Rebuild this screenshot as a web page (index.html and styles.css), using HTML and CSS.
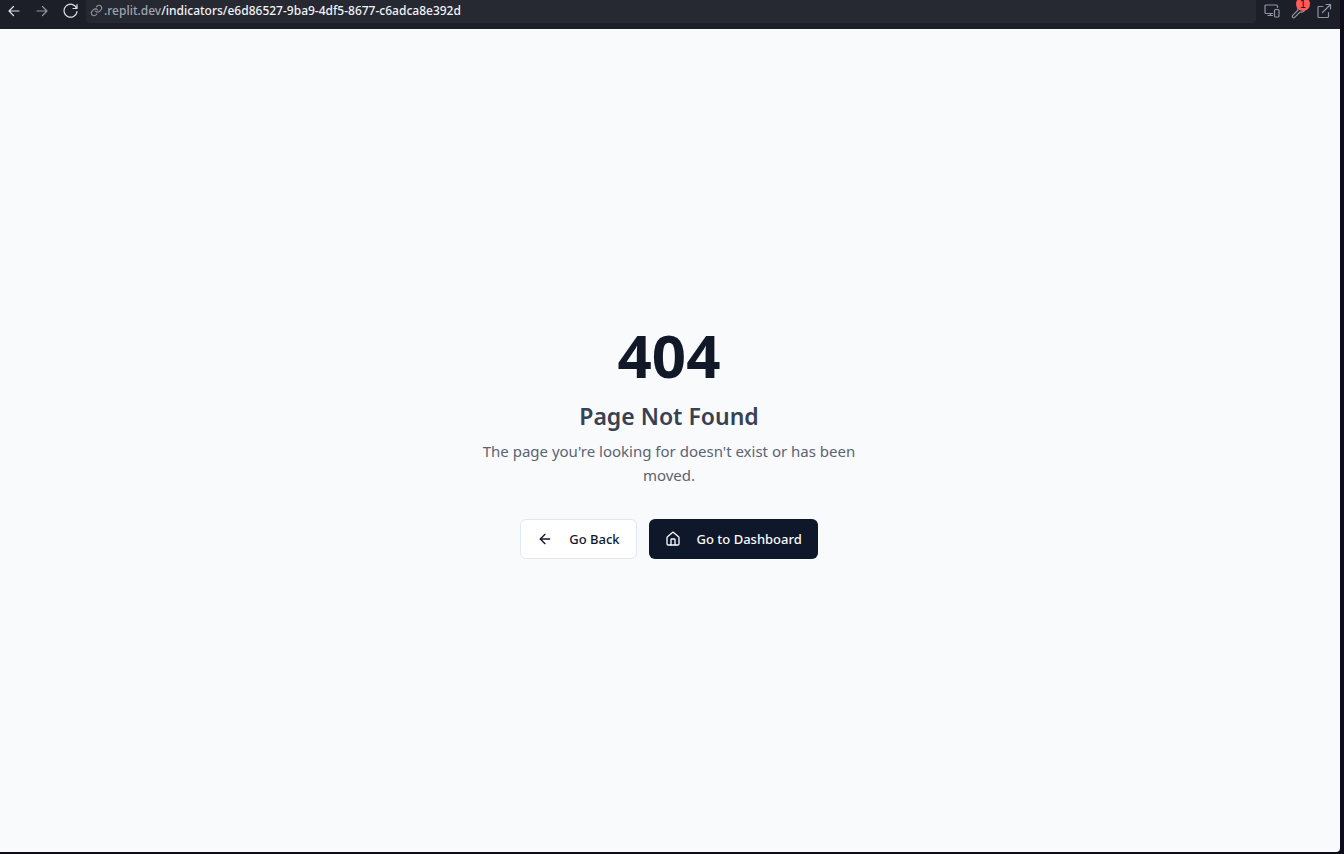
FILE: index.html
```
<!DOCTYPE html>
<html lang="en">
<head>
<meta charset="utf-8">
<title>Page Not Found</title>
<link rel="stylesheet" href="styles.css">
</head>
<body>
<header class="toolbar">
  <nav class="history" aria-label="History">
    <button class="tool tool-bright" aria-label="Back"><svg class="icon" viewBox="0 0 16 16"><path d="M13 8H3.500M7.500 3.500L3 8l4.500 4.500"/></svg></button>
    <button class="tool" aria-label="Forward"><svg class="icon" viewBox="0 0 16 16"><path d="M3 8h9.500M8.500 3.500L13 8l-4.500 4.500"/></svg></button>
    <button class="tool tool-bright" aria-label="Reload"><svg class="icon" viewBox="0 0 16 16"><path d="M15 1.500v4h-4M14.600 5.300A6.500 6.500 0 1 0 15 8.500"/></svg></button>
  </nav>
  <div class="address">
    <svg class="link-icon" viewBox="0 0 24 24"><path d="M10 13a5 5 0 0 0 7.500.5l3-3a5 5 0 0 0-7-7L11.800 5.200"/><path d="M14 11a5 5 0 0 0-7.500-.5l-3 3a5 5 0 0 0 7 7l1.700-1.700"/></svg>
    <label class="host" for="path">.replit.dev</label>
    <input class="path" id="path" type="text" value="/indicators/e6d86527-9ba9-4df5-8677-c6adca8e392d">
  </div>
  <div class="actions">
    <button class="tool" aria-label="Device size"><svg class="icon" viewBox="0 0 16 16"><path d="M8.500 10.500H2A1 1 0 0 1 1 9.500V3a1 1 0 0 1 1-1h10.500a1 1 0 0 1 1 1v1.500M4 12.500h4.500M6.500 10.500v2"/><rect x="10.500" y="6.500" width="4.500" height="7.500" rx="1"/></svg></button>
    <button class="tool" aria-label="Developer tools, 1 issue"><svg class="icon" viewBox="0 0 16 16"><path d="M8 7L2.700 12.300a1.400 1.400 0 0 0 2 2L10 9a4 4 0 0 0 5-5L12.500 6.500 10.500 6.500 10.500 4.500 13 2a4 4 0 0 0-5 5z"/></svg><span class="badge">1</span></button>
    <button class="tool" aria-label="Open in new tab"><svg class="icon" viewBox="0 0 16 16"><path d="M7 3.500H3a1 1 0 0 0-1 1V13.500a1 1 0 0 0 1 1h8.500a1 1 0 0 0 1-1V9.500M10 1.500h4.500V6M14.500 1.500L6.500 9.500"/></svg></button>
  </div>
</header>
<main class="page">
  <section class="notice">
    <h1 class="code">404</h1>
    <h2 class="title">Page Not Found</h2>
    <p class="message">The page you're looking for doesn't exist or has been moved.</p>
    <div class="choices">
      <button class="button button-outline"><svg class="icon lucide" viewBox="0 0 24 24"><path d="m12 19-7-7 7-7"/><path d="M19 12H5"/></svg>Go Back</button>
      <a class="button button-primary" href="#"><svg class="icon lucide" viewBox="0 0 24 24"><path d="M15 21v-8a1 1 0 0 0-1-1h-4a1 1 0 0 0-1 1v8"/><path d="M3 10a2 2 0 0 1 .709-1.528l7-5.999a2 2 0 0 1 2.582 0l7 5.999A2 2 0 0 1 21 10v9a2 2 0 0 1-2 2H5a2 2 0 0 1-2-2z"/></svg>Go to Dashboard</a>
    </div>
  </section>
</main>
</body>
</html>
```
FILE: styles.css
```
* { box-sizing: border-box; }
body {
  margin: 0;
  min-height: 100vh;
  display: flex;
  flex-direction: column;
  padding: 0 4px 2px 0;
  background: #0e0c18;
  font-family: "Noto Sans", "Open Sans", sans-serif;
}
button, input { font: inherit; }
svg { fill: none; stroke: currentColor; stroke-linecap: round; stroke-linejoin: round; flex: none; }
.icon { width: 16px; height: 16px; }
.toolbar {
  display: flex;
  align-items: flex-start;
  height: 29px;
  background: #1c1e28;
}
.history, .actions { display: flex; }
.history { padding-right: 2px; }
.actions { padding: 0 3px; }
.tool {
  position: relative;
  display: flex;
  align-items: center;
  justify-content: center;
  width: 28px;
  height: 22px;
  padding: 0;
  border: 0;
  background: none;
  color: #9095a3;
}
.tool .icon { stroke-width: 1.2; }
.actions .tool { width: 26px; }
.tool-bright { color: #dfe1e8; }
.badge {
  position: absolute;
  top: -3px;
  right: 1px;
  width: 14px;
  height: 14px;
  padding-top: 3px;
  border-radius: 7px;
  background: #ff5b5b;
  color: #3a0a10;
  font-family: "DejaVu Sans", sans-serif;
  font-size: 10px;
  line-height: 10px;
  text-align: center;
}
.address {
  flex: 1;
  display: flex;
  align-items: center;
  height: 23px;
  padding: 0 4px 2px;
  border-radius: 0 0 4px 4px;
  background: #262932;
  font-size: 12px;
  font-weight: 500;
}
.link-icon { width: 13px; height: 13px; margin-right: 1px; color: #9095a3; stroke-width: 2; }
.host { color: #9fa3af; }
.path {
  flex: 1;
  min-width: 0;
  height: 20px;
  padding: 0;
  border: 0;
  outline: 0;
  background: none;
  color: #f2f3f6;
}
.page {
  flex: 1;
  display: flex;
  align-items: center;
  justify-content: center;
  padding: 2px 2px 0 0;
  border-bottom-right-radius: 4px;
  background: #f9fafc;
}
.notice { width: 384px; max-width: 100%; text-align: center; }
.code { margin: 0 0 15px; font-size: 60px; line-height: 60px; font-weight: 700; color: #111827; }
.title { margin: 0 0 7px; font-size: 23px; line-height: 32px; font-weight: 600; color: #374151; }
.message { margin: 0 0 32px; font-size: 15px; line-height: 24px; color: #5a6372; }
.choices { display: flex; justify-content: center; gap: 12px; }
.button {
  display: flex;
  align-items: center;
  gap: 16px;
  height: 40px;
  padding: 0 16px;
  border: 0;
  border-radius: 6px;
  font-size: 13px;
  font-weight: 500;
  line-height: 20px;
  text-decoration: none;
}
.button-outline { border: 1px solid #e2e8f0; background: #fff; color: #0f172a; }
.button-primary { background: #0f172a; color: #f8fafc; }
.lucide { stroke-width: 2; }
```
